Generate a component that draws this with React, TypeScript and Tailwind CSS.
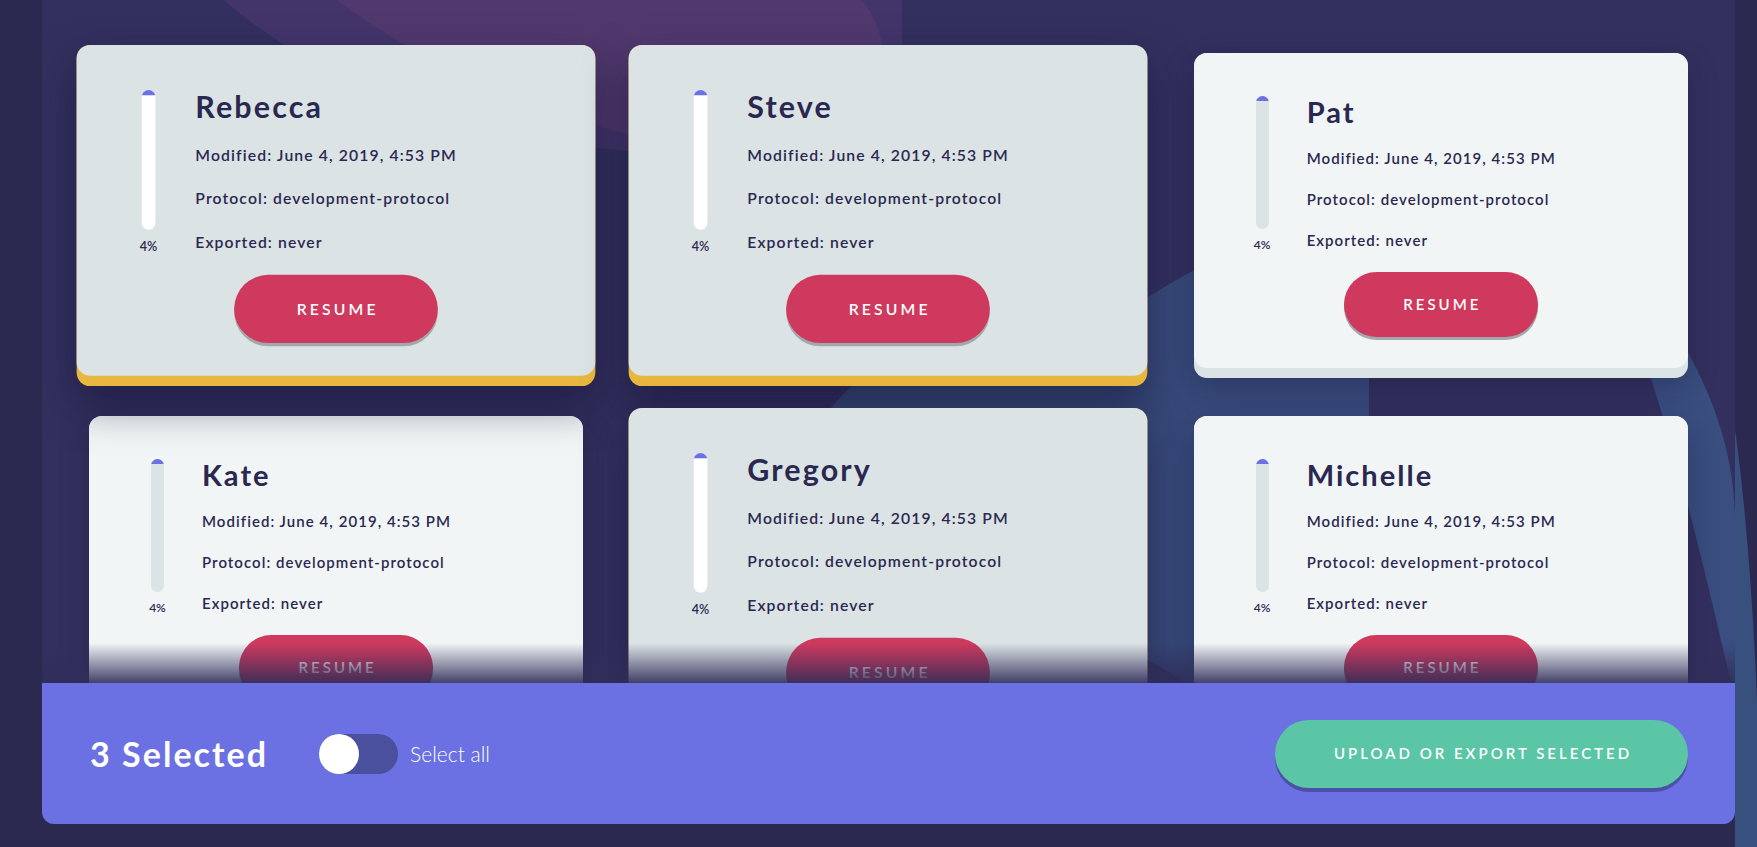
const people = [
  { name: "Rebecca", selected: true },
  { name: "Steve", selected: true },
  { name: "Pat", selected: false },
  { name: "Kate", selected: false },
  { name: "Gregory", selected: true },
  { name: "Michelle", selected: false },
];

function SessionCard({ name, selected }: { name: string; selected: boolean }) {
  return (
    <div
      className={
        selected
          ? "h-[325px] scale-105 rounded-[13px] bg-[#e8b73f] shadow-[0_18px_40px_rgba(18,16,48,0.5)]"
          : "h-[325px] rounded-[13px] bg-[#dce3e5] shadow-[0_10px_30px_rgba(18,16,48,0.3)]"
      }
    >
      <div
        className={
          selected
            ? "flex h-[315px] flex-col rounded-[13px] bg-[#dce3e5] pt-[40px] text-[#2a2850]"
            : "flex h-[315px] flex-col rounded-[13px] bg-[#f1f5f6] pt-[40px] text-[#2a2850]"
        }
      >
        <div className="flex pl-[62px]">
          <div className="flex w-[13px] flex-col items-center pt-[3px]">
            <div
              className={
                selected
                  ? "h-[133px] w-[13px] overflow-hidden rounded-full bg-white"
                  : "h-[133px] w-[13px] overflow-hidden rounded-full bg-[#dce3e5]"
              }
            >
              <div className="h-[4%] bg-[#6b71e3]" />
            </div>
            <div className="mt-[8px] whitespace-nowrap text-[12px] leading-4 font-semibold">4%</div>
          </div>
          <div className="ml-[38px] flex flex-col">
            <div className="mt-[2px] text-[29px] leading-[1.16] font-bold tracking-[0.07em]">{name}</div>
            <div className="mt-[19px] flex flex-col gap-[21px] text-[15px] leading-5 font-semibold tracking-[0.07em]">
              <div>Modified: June 4, 2019, 4:53 PM</div>
              <div>Protocol: development-protocol</div>
              <div>Exported: never</div>
            </div>
          </div>
        </div>
        <div className="mt-[19px] flex justify-center">
          <button className="flex h-[65px] w-[194px] items-center justify-center rounded-full bg-[#d0395e] pl-[0.2em] text-[15px] font-semibold tracking-[0.2em] text-white shadow-[0_3px_0_#a1a9ad]">
            RESUME
          </button>
        </div>
      </div>
    </div>
  );
}

export default function App() {
  return (
    <div className="relative h-[847px] w-full overflow-hidden bg-[#2b2950] font-['Lato',sans-serif]">
      {/* blue streak on the right edge, outside the panel */}
      <svg className="absolute top-0 right-0 h-[847px] w-[22px]" viewBox="0 0 22 847" preserveAspectRatio="none">
        <path d="M0 430 C10 500 18 600 22 700 L22 847 L0 847 Z" fill="#37507e" />
      </svg>

      <div className="relative ml-[42px] mr-[22px] flex h-[824px] flex-col overflow-hidden rounded-b-[12px] bg-[#33305f]">
        <svg className="absolute inset-0 h-full w-full" viewBox="0 0 1693 824" preserveAspectRatio="none">
          <path d="M182 0 C260 70 380 115 480 135 C560 150 620 158 660 150 L860 60 L860 0 Z" fill="#43356a" />
          <path d="M295 0 C380 65 500 112 600 138 C680 150 760 130 830 100 C850 60 840 25 820 0 Z" fill="#51396e" />
          <path d="M780 420 C820 360 900 330 1000 330 C1080 330 1120 280 1160 268 C1240 250 1300 280 1327 330 L1327 824 L780 824 Z" fill="#384a7b" />
          <ellipse cx="1010" cy="790" rx="190" ry="150" fill="#2f3360" />
          <path d="M1560 240 C1640 320 1693 420 1693 520 L1693 700 C1660 560 1630 420 1560 240 Z" fill="#3a4e80" />
        </svg>

        <div className="relative flex-1 overflow-hidden">
          <div className="grid grid-cols-3 gap-x-[58px] gap-y-[38px] px-[47px] pt-[53px]">
            {people.map((p) => (
              <SessionCard key={p.name} name={p.name} selected={p.selected} />
            ))}
          </div>
          <div className="pointer-events-none absolute right-0 bottom-0 left-0 h-[40px] bg-linear-to-b from-[#2f2d58]/0 to-[#2f2d58]/90" />
        </div>

        <div className="relative flex h-[141px] shrink-0 items-center justify-between bg-[#6b71e3] pr-[47px] pl-[48px]">
          <div className="flex items-center">
            <span className="text-[34px] leading-none font-bold tracking-[0.06em] text-white">3 Selected</span>
            <div className="ml-[51px] flex h-[40px] w-[79px] items-center rounded-full bg-[#4a4f9e]">
              <div className="h-[40px] w-[40px] rounded-full bg-white" />
            </div>
            <span className="ml-[12px] text-[21px] font-light text-white">Select all</span>
          </div>
          <button className="h-[68px] w-[413px] rounded-full bg-[#5bc6a5] pl-[0.2em] text-[15px] font-semibold tracking-[0.2em] text-white shadow-[0_4px_0_#4b50a8]">
            UPLOAD OR EXPORT SELECTED
          </button>
        </div>
      </div>
    </div>
  );
}
